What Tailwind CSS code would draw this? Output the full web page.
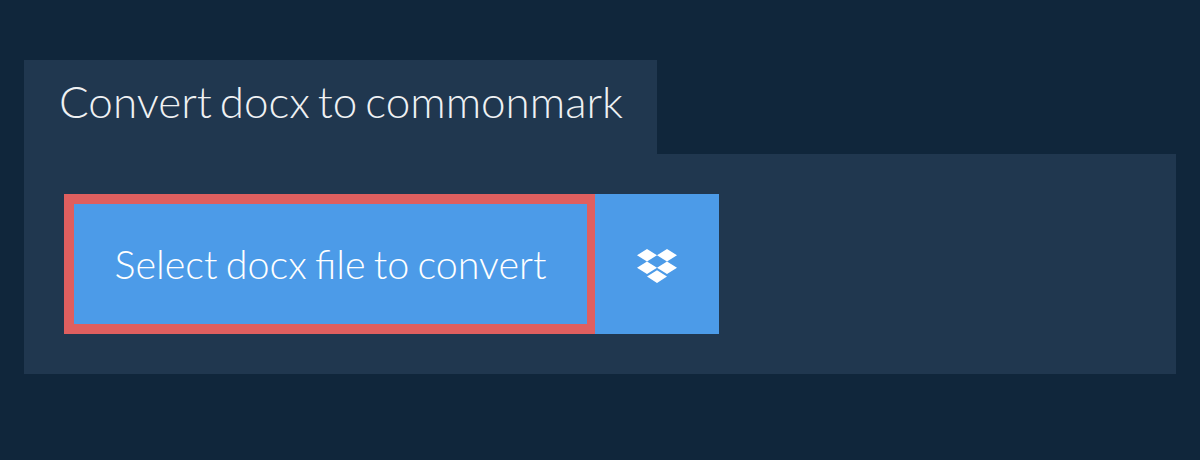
<!DOCTYPE html>
<html lang="en">
<head>
  <meta charset="UTF-8" />
  <title>Convert docx to commonmark</title>
  <script src="https://cdn.jsdelivr.net/npm/@tailwindcss/browser@4"></script>
</head>
<body class="bg-[#10263b] h-[460px] overflow-hidden font-['Lato',sans-serif] font-light">
  <div class="pt-[60px] px-6">
    <!-- title tab -->
    <h1 class="bg-[#20374f] text-[#eff1f3] text-[44px] [word-spacing:-4px] leading-[82px] h-[94px] w-[633px] pl-[35px] font-light">Convert docx to commonmark</h1>
    <!-- panel -->
    <div class="bg-[#20374f] p-10 flex">
      <button class="bg-[#4c9be8] border-[10px] border-r-[8px] border-[#df5f5f] h-[140px] w-[531px] text-white text-[39.5px] [word-spacing:-2.5px] font-light flex items-center justify-center">Select docx file to convert</button>
      <button class="bg-[#4c9be8] h-[140px] w-[124px] pr-[1px] pt-[4px] flex items-center justify-center">
        <svg class="w-10 h-[34px]" viewBox="0 0 40 34" fill="#fff"><path d="M10 0 0 6.2l10 6.2 10-6.2zM30 0 20 6.2l10 6.2 10-6.2zM0 18.7l10 6.2 10-6.2-10-6.2zM30 12.5l-10 6.2 10 6.2 10-6.2zM10 27.5l10 6.5 10-6.5-10-6.3z"/></svg>
      </button>
    </div>
  </div>
</body>
</html>
